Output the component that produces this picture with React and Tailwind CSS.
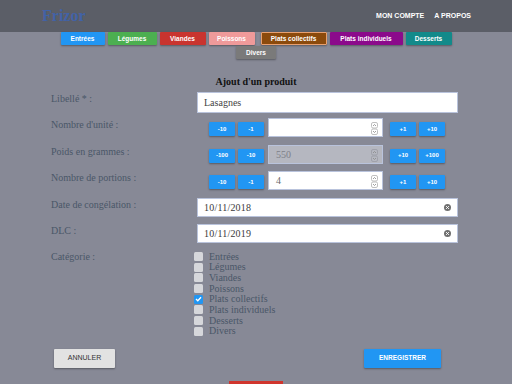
import React from 'react';

const tabs = [
  { label: 'Entrées', w: 'w-[44px]', bg: 'bg-[#2196f3]' },
  { label: 'Légumes', w: 'w-[49px]', bg: 'bg-[#4caf50]' },
  { label: 'Viandes', w: 'w-[46px]', bg: 'bg-[#c9342f]' },
  { label: 'Poissons', w: 'w-[46px]', bg: 'bg-[#ef9a9a]' },
  { label: 'Plats collectifs', w: 'w-[66px] ml-[3px] border border-[#e8a070]', bg: 'bg-[#8b4a0c]' },
  { label: 'Plats individuels', w: 'w-[73px]', bg: 'bg-[#8b0a8b]' },
  { label: 'Desserts', w: 'w-[46px]', bg: 'bg-[#128a8a]' },
  { label: 'Divers', w: 'w-[40px]', bg: 'bg-[#7a7a7a]' },
];

const categories = [
  'Entrées',
  'Légumes',
  'Viandes',
  'Poissons',
  'Plats collectifs',
  'Plats individuels',
  'Desserts',
  'Divers',
];

function BlueBtn({ children }) {
  return (
    <div className="w-[26px] h-[14px] bg-[#2196f3] rounded-[1px] shadow-[0_1px_2px_rgba(0,0,0,0.35)] flex items-center justify-center text-white text-[6px] font-bold font-['Liberation_Sans',sans-serif]">
      {children}
    </div>
  );
}

function Spinner({ disabled }) {
  const c = disabled ? '#9a9ca5' : '#b0b0b0';
  return (
    <svg width="7" height="13" viewBox="0 0 7 13" className="absolute right-[4px] top-[3px]">
      <rect x="0.5" y="0.5" width="6" height="5.5" rx="1.5" fill="none" stroke={c} strokeWidth="0.8" />
      <rect x="0.5" y="7" width="6" height="5.5" rx="1.5" fill="none" stroke={c} strokeWidth="0.8" />
      <path d="M2 4 L3.5 2.5 L5 4" fill="none" stroke="#888" strokeWidth="0.8" />
      <path d="M2 9 L3.5 10.5 L5 9" fill="none" stroke="#888" strokeWidth="0.8" />
    </svg>
  );
}

function NumberRow({ left, right, value, disabled }) {
  return (
    <div className="flex items-start pl-[12px]">
      <div className="flex gap-[3px] mt-[4px]">
        <BlueBtn>{left[0]}</BlueBtn>
        <BlueBtn>{left[1]}</BlueBtn>
      </div>
      <div
        className={`relative ml-[4px] w-[115px] h-[19px] border border-[#b9c3dc] flex items-center pl-[7px] text-[10px] ${
          disabled ? 'bg-[#b5b7c0] text-[#7d7f88]' : 'bg-white text-[#6a6a6a]'
        }`}
      >
        {value}
        <Spinner disabled={disabled} />
      </div>
      <div className="flex gap-[3px] mt-[4px] ml-[7px]">
        <BlueBtn>{right[0]}</BlueBtn>
        <BlueBtn>{right[1]}</BlueBtn>
      </div>
    </div>
  );
}

function DateInput({ value }) {
  return (
    <div className="relative w-[261px] h-[19px] bg-white border border-[#b9c3dc] flex items-center pl-[6px] text-[10px] text-[#3a3a3a] tracking-[0.2px]">
      {value}
      <svg width="7" height="7" viewBox="0 0 8 8" className="absolute right-[6px] top-[5px]">
        <circle cx="4" cy="4" r="4" fill="#6f6f6f" />
        <path d="M2.4 2.4 L5.6 5.6 M5.6 2.4 L2.4 5.6" stroke="#fff" strokeWidth="1.1" />
      </svg>
    </div>
  );
}

function Row({ label, children }) {
  return (
    <div className="flex h-[26.4px]">
      <div className="w-[146px] leading-[11px] pt-[1px] text-[#4a5768]">{label}</div>
      <div className="w-[261px]">{children}</div>
    </div>
  );
}

export default function App() {
  return (
    <div className="w-[512px] h-[384px] overflow-hidden bg-[#878996] font-['Liberation_Serif',serif]">
      <div className="h-[32px] bg-[#5b5e67] flex items-center justify-between pl-[42px] pr-[41px]">
        <div className="text-[16px] font-bold text-[#4262a6] leading-[16px]">Frizor</div>
        <div className="flex gap-[10px] text-[7px] font-bold text-white font-['Liberation_Sans',sans-serif]">
          <span>MON COMPTE</span>
          <span>A PROPOS</span>
        </div>
      </div>

      <div className="w-[400px] mx-auto flex flex-wrap justify-center gap-x-[3px] gap-y-[1px]">
        {tabs.map((t) => (
          <div
            key={t.label}
            className={`${t.w} ${t.bg} h-[13px] rounded-[1px] shadow-[0_1px_2px_rgba(0,0,0,0.35)] flex items-center justify-center text-white text-[6.5px] font-bold font-['Liberation_Sans',sans-serif]`}
          >
            {t.label}
          </div>
        ))}
      </div>

      <div className="mt-[17px] text-center text-[10px] font-bold text-[#111] leading-[12px]">
        Ajout d'un produit
      </div>

      <div className="mt-[4px] pl-[51px] text-[10px]">
        <Row label="Libellé * :">
          <div className="w-[261px] h-[21px] bg-white border border-[#b9c3dc] flex items-center pl-[6px] text-[10px] text-[#444]">
            Lasagnes
          </div>
        </Row>
        <Row label="Nombre d'unité :">
          <NumberRow left={['-10', '-1']} right={['+1', '+10']} value="" />
        </Row>
        <Row label="Poids en grammes :">
          <NumberRow left={['-100', '-10']} right={['+10', '+100']} value="550" disabled />
        </Row>
        <Row label="Nombre de portions :">
          <NumberRow left={['-10', '-1']} right={['+1', '+10']} value="4" />
        </Row>
        <Row label="Date de congélation :">
          <DateInput value="10/11/2018" />
        </Row>
        <Row label="DLC :">
          <DateInput value="10/11/2019" />
        </Row>
        <div className="flex">
          <div className="w-[146px] leading-[11px] pt-[1px] text-[#4a5768]">Catégorie :</div>
          <div className="pt-[1px]">
            {categories.map((c) => (
              <div key={c} className="flex items-center h-[10.67px] -ml-[3px]">
                {c === 'Plats collectifs' ? (
                  <div className="w-[9px] h-[9px] rounded-[1.5px] bg-[#2196f3] flex items-center justify-center">
                    <svg width="7" height="6" viewBox="0 0 7 6">
                      <path d="M1 3 L2.8 4.8 L6 1.2" fill="none" stroke="#fff" strokeWidth="1.3" />
                    </svg>
                  </div>
                ) : (
                  <div className="w-[9px] h-[9px] rounded-[1.5px] bg-[#d6d7db]" />
                )}
                <span className="ml-[6px] text-[#4a5768] leading-[10px]">{c}</span>
              </div>
            ))}
          </div>
        </div>
      </div>

      <div className="mt-[12px] flex pl-[54px] font-['Liberation_Sans',sans-serif]">
        <div className="w-[61px] h-[19px] bg-[#e2e2e2] rounded-[1px] shadow-[0_1px_2px_rgba(0,0,0,0.35)] flex items-center justify-center text-[7px] text-[#333]">
          ANNULER
        </div>
        <div className="ml-[249px] w-[77px] h-[19px] bg-[#2196f3] rounded-[1px] shadow-[0_1px_2px_rgba(0,0,0,0.35)] flex items-center justify-center text-[6.5px] font-bold text-white">
          ENREGISTRER
        </div>
      </div>

      <div className="mt-[13px] mx-auto w-[54px] h-[6px] bg-[#d0352d]" />
    </div>
  );
}
